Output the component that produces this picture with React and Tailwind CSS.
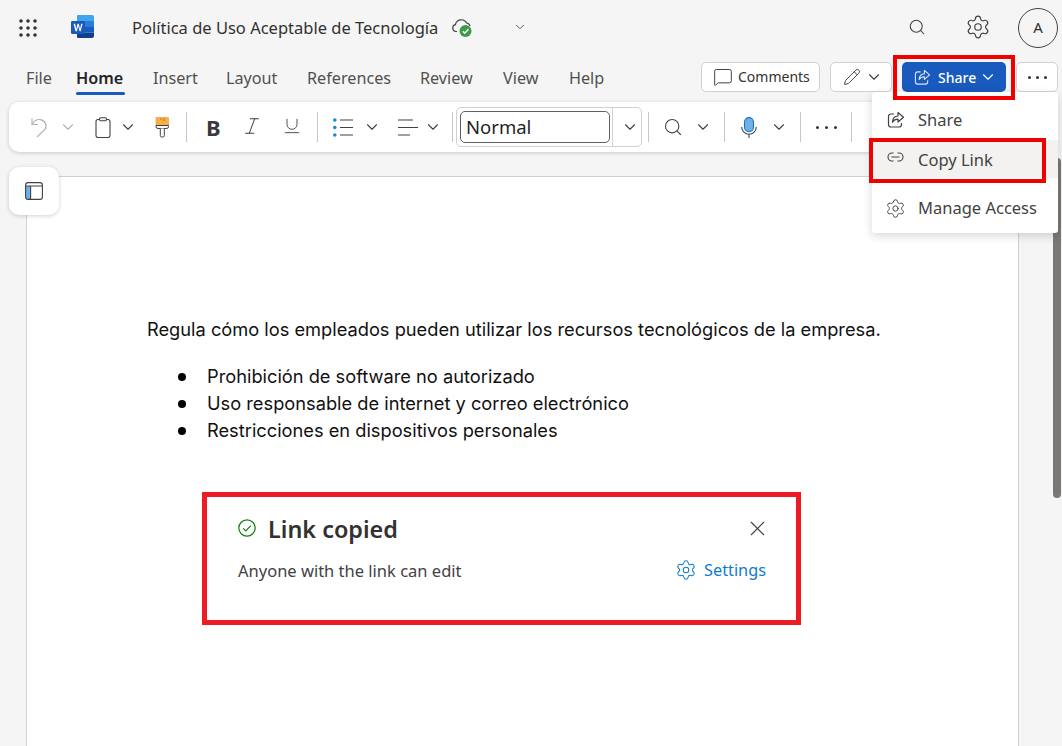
import React from "react";
import { ChevronDown, Italic, MessageSquare, Pencil, Search, Settings, Underline, X } from "lucide-react";

const UI_FONT = "font-['Noto_Sans','Open_Sans',sans-serif]";

function Waffle() {
  const dots = [];
  for (let r = 0; r < 3; r++) {
    for (let c = 0; c < 3; c++) {
      dots.push(<circle key={`${r}-${c}`} cx={2 + c * 7} cy={2 + r * 7} r="1.8" fill="#333" />);
    }
  }
  return (
    <svg width="18" height="18" viewBox="0 0 18 18">
      {dots}
    </svg>
  );
}

function WordLogo() {
  return (
    <svg width="23" height="23" viewBox="0 0 23 23">
      <path d="M7 0h14a2 2 0 0 1 2 2v4H6V1a1 1 0 0 1 1-1z" fill="#41a5ee" />
      <rect x="6" y="6" width="17" height="6" fill="#2b7cd3" />
      <rect x="6" y="12" width="17" height="5.5" fill="#185abd" />
      <path d="M6 17.5h17V21a2 2 0 0 1-2 2H7a1 1 0 0 1-1-1z" fill="#103f91" />
      <rect x="0" y="6" width="14" height="13" rx="1.2" fill="#185abd" />
      <path d="M2.6 8.8h1.5l1.2 5.2 1.2-5.2h1.3l1.2 5.2 1.2-5.2h1.4l-1.9 7.4H8.6L7.2 11l-1.3 5.2H4.5z" fill="#fff" />
    </svg>
  );
}

function CloudCheck() {
  return (
    <svg width="23" height="22" viewBox="0 0 23 22" fill="none">
      <path d="M6 14.5H5a3.5 3.5 0 0 1-.6-6.9A6 6 0 0 1 15.6 6a4 4 0 0 1 3.4 3" stroke="#424242" strokeWidth="1.2" />
      <circle cx="14.5" cy="14" r="6" fill="#3a9a45" />
      <path d="M11.8 14.2l2 2 3.6-3.9" stroke="#fff" strokeWidth="1.6" />
    </svg>
  );
}

function ShareIcon({ color = "#424242", size = 18 }) {
  return (
    <svg width={size} height={size} viewBox="0 0 18 18" fill="none" stroke={color} strokeWidth="1.2" strokeLinejoin="round">
      <path d="M7 3H4a2.5 2.5 0 0 0-2.5 2.5v8A2.5 2.5 0 0 0 4 16h8a2.5 2.5 0 0 0 2.5-2.5V12" />
      <path d="M11 1.5l5.5 4.7-5.5 4.8V8.2c-2.6 0-4.4 1-5.6 3 .2-3.7 2.2-6 5.6-6.2z" />
    </svg>
  );
}

function LinkIcon() {
  return (
    <svg width="17" height="10" viewBox="0 0 17 10" fill="none" stroke="#424242" strokeWidth="1.1" className="-mt-[5px]">
      <path d="M6.5 1H5a4 4 0 0 0 0 8h1.5M10.5 1H12a4 4 0 0 1 0 8h-1.5M4.5 5h8" />
    </svg>
  );
}

function UndoIcon() {
  return (
    <svg width="17" height="21" viewBox="0 0 17 21" fill="none" stroke="#b5b3b1" strokeWidth="1.2">
      <path d="M1 1.5v6h6" />
      <path d="M1 7.5C3 4 6 2 9.5 2.6c4.5.8 7 6 4.6 9.6L6 20" />
    </svg>
  );
}

function ClipboardIcon() {
  return (
    <svg width="16" height="21" viewBox="0 0 16 21" fill="none" stroke="#424242" strokeWidth="1.1">
      <rect x="1" y="2.5" width="14" height="18" rx="2" />
      <rect x="4.5" y="0.8" width="7" height="3" rx="1.2" fill="#f5f5f5" />
    </svg>
  );
}

function BrushIcon() {
  return (
    <svg width="14" height="21" viewBox="0 0 14 21" fill="none">
      <path d="M1 0.5h12.5v9a2 2 0 0 1-2 2H3a2 2 0 0 1-2-2z" fill="#f7b04a" stroke="#e59a2e" strokeWidth="0.6" />
      <path d="M1 8.5h12.5v1a2 2 0 0 1-2 2H3a2 2 0 0 1-2-2z" fill="#fff" stroke="#424242" strokeWidth="1" />
      <path d="M5.3 11.5v7a1.5 1.5 0 0 0 1.5 1.5h1a1.5 1.5 0 0 0 1.5-1.5v-7" stroke="#424242" strokeWidth="1" fill="#fff" />
      <path d="M9 1v3M6 1v2" stroke="#c9770f" strokeWidth="1" />
    </svg>
  );
}

function BulletsIcon() {
  return (
    <svg width="20" height="19" viewBox="0 0 20 19" fill="none">
      <circle cx="1.8" cy="2" r="1.8" fill="#1a86d9" />
      <circle cx="1.8" cy="9.5" r="1.8" fill="#1a86d9" />
      <circle cx="1.8" cy="17" r="1.8" fill="#1a86d9" />
      <path d="M7 2h13M7 9.5h13M7 17h13" stroke="#424242" strokeWidth="1.2" />
    </svg>
  );
}

function AlignIcon() {
  return (
    <svg width="20" height="17" viewBox="0 0 20 17" fill="none" stroke="#424242" strokeWidth="1.2">
      <path d="M0 1h15M0 8.5h20M0 16h12" />
    </svg>
  );
}

function MicIcon() {
  return (
    <svg width="16" height="21" viewBox="0 0 16 21" fill="none">
      <rect x="3.5" y="0.6" width="9" height="14" rx="4.5" fill="#6fb1e6" stroke="#1a78c2" strokeWidth="1.1" />
      <path d="M0.7 10a7.3 7.3 0 0 0 14.6 0M8 17.3V21" stroke="#424242" strokeWidth="1.1" />
    </svg>
  );
}

function PanelIcon() {
  return (
    <svg width="18" height="18" viewBox="0 0 18 18" fill="none">
      <rect x="1" y="4" width="4.6" height="13" fill="#6fb1e6" />
      <rect x="0.6" y="0.6" width="16.8" height="16.8" rx="2.5" stroke="#424242" strokeWidth="1.1" />
      <path d="M1 4h16M5.6 4v13.4" stroke="#424242" strokeWidth="1.1" />
    </svg>
  );
}

function CheckCircle() {
  return (
    <svg width="18" height="18" viewBox="0 0 18 18" fill="none" stroke="#107c10" strokeWidth="1.2" className="shrink-0 -mt-[3px]">
      <circle cx="9" cy="9" r="8.2" />
      <path d="M5.2 9.4l2.6 2.5 5-5.2" />
    </svg>
  );
}

function Dots({ gap = "gap-[5px]" }) {
  return (
    <div className={`flex ${gap}`}>
      <span className="w-[3px] h-[3px] rounded-full bg-[#333]" />
      <span className="w-[3px] h-[3px] rounded-full bg-[#333]" />
      <span className="w-[3px] h-[3px] rounded-full bg-[#333]" />
    </div>
  );
}

function Sep({ className }) {
  return <div className={`w-px h-[30px] shrink-0 bg-[#c8c6c4] ${className}`} />;
}

function Chev({ className = "", color = "#424242" }) {
  return <ChevronDown size={18} strokeWidth={1.5} color={color} className={`shrink-0 ${className}`} />;
}

const TABS = [
  { label: "File", w: "w-[50px]" },
  { label: "Home", w: "w-[77px]", active: true },
  { label: "Insert", w: "w-[73px]" },
  { label: "Layout", w: "w-[81px]" },
  { label: "References", w: "w-[113px]" },
  { label: "Review", w: "w-[83px]" },
  { label: "View", w: "w-[66px]" },
  { label: "Help", w: "w-[50px]" },
];

const BULLETS = [
  "Prohibición de software no autorizado",
  "Uso responsable de internet y correo electrónico",
  "Restricciones en dispositivos personales",
];

export default function App() {
  return (
    <div className={`relative w-[1062px] h-[746px] overflow-hidden bg-[#f5f5f5] ${UI_FONT}`}>
      {/* title bar */}
      <div className="h-[55px] flex items-center">
        <div className="ml-[19px] shrink-0"><Waffle /></div>
        <div className="ml-[34px] shrink-0 -mt-[2px]"><WordLogo /></div>
        <span className="ml-[38px] text-[16.5px] leading-none text-[#323130] mt-[2px] w-[319px] whitespace-nowrap">Política de Uso Aceptable de Tecnología</span>
        <CloudCheck />
        <ChevronDown size={14} strokeWidth={1.5} color="#424242" className="ml-[39px] -mt-[2px]" />
        <Search size={18} strokeWidth={1.4} color="#424242" className="ml-[381px] -mt-[1px]" />
        <Settings size={26} strokeWidth={1.1} color="#424242" className="ml-[39px] -mt-[1px]" />
        <div className="ml-[27px] w-[40px] h-[40px] rounded-full border border-[#424242] flex items-center justify-center text-[15px] text-[#323130]">A</div>
      </div>

      {/* tabs */}
      <div className="h-[47px] flex items-start pl-[26px]">
        {TABS.map((t) => (
          <div key={t.label} className={`${t.w} h-[40px] relative pt-[10px] text-[16.2px] leading-[26px] ${t.active ? "font-semibold text-[#242424]" : "text-[#505050]"}`}>
            {t.label}
            {t.active && <span className="absolute left-0 top-[37px] w-[49px] h-[3px] rounded-full bg-[#185abd]" />}
          </div>
        ))}
        <div className="ml-[82px] mt-[7px] w-[119px] h-[30px] bg-white border border-[#d1d1d1] rounded-[5px] flex items-center pl-[11px] gap-[5px] text-[14px] text-[#323130]">
          <MessageSquare size={20} strokeWidth={1.1} />
          <span className="-mt-[2px]">Comments</span>
        </div>
        <div className="ml-[10px] mt-[7px] w-[62px] h-[30px] bg-white border border-[#d1d1d1] rounded-[5px] flex items-center pl-[12px] gap-[4px]">
          <Pencil size={18} strokeWidth={1.3} color="#424242" />
          <Chev />
        </div>
        <div className="ml-[10px] mt-[7px] w-[104px] h-[30px] bg-[#185abd] rounded-[5px] flex items-center pl-[12px] text-[14px] text-white font-medium">
          <ShareIcon color="#dbe7f8" size={17} />
          <span className="ml-[7px]">Share</span>
          <Chev color="#fff" className="ml-[3px]" />
        </div>
        <div className="ml-[10px] mt-[7px] w-[42px] h-[30px] bg-white border border-[#d1d1d1] rounded-[5px] flex items-center justify-center">
          <Dots />
        </div>
      </div>

      {/* ribbon */}
      <div className="ml-[9px] mr-[12px] h-[50px] bg-white rounded-[10px] shadow-[0_1px_4px_rgba(0,0,0,0.18)] flex items-center">
        <div className="ml-[22px]"><UndoIcon /></div>
        <Chev className="ml-[11px]" color="#b5b3b1" />
        <div className="ml-[18px]"><ClipboardIcon /></div>
        <Chev className="ml-[8px]" />
        <div className="ml-[18px]"><BrushIcon /></div>
        <Sep className="ml-[17px]" />
        <span className="ml-[19px] w-[20px] text-[22px] leading-none font-bold text-[#3a3a3a]">B</span>
        <Italic size={22} strokeWidth={1.1} color="#424242" className="ml-[15px] shrink-0 -mt-[2px]" />
        <Underline size={20} strokeWidth={1.1} color="#424242" className="ml-[19px] shrink-0 -mt-[2px]" />
        <Sep className="ml-[15px]" />
        <div className="ml-[15px]"><BulletsIcon /></div>
        <Chev className="ml-[10px]" />
        <div className="ml-[17px]"><AlignIcon /></div>
        <Chev className="ml-[6px]" />
        <Sep className="ml-[10px]" />
        <div className="ml-[3px] w-[186px] h-[40px] shrink-0 border border-[#d1d1d1] rounded-[5px] flex items-center">
          <div className="ml-[3px] w-[150px] h-[32px] border border-[#616161] rounded-[5px] flex items-center pl-[5px] text-[18.5px] text-[#1f1f1f]">Normal</div>
          <div className="ml-[2px] w-px h-[38px] bg-[#d1d1d1]" />
          <Chev className="ml-[8px]" />
        </div>
        <Sep className="ml-[6px]" />
        <Search size={20} strokeWidth={1.3} color="#424242" className="ml-[14px] shrink-0" />
        <Chev className="ml-[11px]" />
        <Sep className="ml-[12px]" />
        <div className="ml-[16px]"><MicIcon /></div>
        <Chev className="ml-[13px]" />
        <Sep className="ml-[12px]" />
        <div className="ml-[15px]"><Dots gap="gap-[6px]" /></div>
        <Sep className="ml-[14px]" />
      </div>

      {/* document page */}
      <div className="ml-[26px] mr-[43px] mt-[24px] h-[600px] bg-white border border-[#d1d1d1] pt-[139px] pl-[120px] font-['Inter',sans-serif] text-[18.25px] leading-[27px] text-[#111]">
        <p className="whitespace-nowrap">Regula cómo los empleados pueden utilizar los recursos tecnológicos de la empresa.</p>
        <ul className="mt-[20px] pl-[31px]">
          {BULLETS.map((b) => (
            <li key={b} className="flex items-center whitespace-nowrap">
              <span className="w-[8px] h-[8px] rounded-full bg-black shrink-0" />
              <span className="ml-[21px]">{b}</span>
            </li>
          ))}
        </ul>

        {/* pasted notification */}
        <div className={`mt-[48px] ml-[55px] w-[599px] h-[133px] border-[5px] border-[#ed1c24] pt-[16px] pl-[31px] pr-[30px] ${UI_FONT}`}>
          <div className="flex items-center h-[32px]">
            <CheckCircle />
            <span className="ml-[12px] text-[23.4px] leading-[32px] font-semibold text-[#323130]">Link copied</span>
            <X size={25} strokeWidth={1.1} color="#424242" className="ml-auto -mr-[4px] -mt-[2px]" />
          </div>
          <div className="mt-[14px] flex items-center">
            <span className="text-[16.5px] leading-[24px] text-[#424242]">Anyone with the link can edit</span>
            <Settings size={22} strokeWidth={1.1} color="#0f7bd0" className="ml-auto -mt-[2px]" />
            <span className="ml-[7px] text-[16.3px] leading-[24px] text-[#0f7bd0] -mt-[2px]">Settings</span>
          </div>
        </div>
      </div>

      {/* floating bits */}
      <div className="absolute left-[9px] top-[167px] w-[50px] h-[48px] bg-white rounded-[10px] shadow-[0_1px_4px_rgba(0,0,0,0.18)] flex items-center justify-center">
        <PanelIcon />
      </div>
      <div className="absolute left-[1053px] top-[158px] w-[8px] h-[340px] rounded-full bg-[#7a7775]" />

      {/* share menu */}
      <div className="absolute left-[872px] top-[92px] w-[186px] h-[141px] bg-white rounded-[3px] shadow-[0_3px_10px_rgba(0,0,0,0.16)] pt-[9px] text-[16.5px] text-[#424242]">
        <div className="h-[38px] flex items-center pl-[15px]">
          <ShareIcon size={18} />
          <span className="ml-[13px]">Share</span>
        </div>
        <div className="mt-[1px] h-[38px] bg-[#f3f2f1] flex items-center pl-[15px]">
          <LinkIcon />
          <span className="ml-[14px] mt-[2px]">Copy Link</span>
        </div>
        <div className="mt-[11px] h-[38px] flex items-center pl-[13px]">
          <Settings size={21} strokeWidth={1.1} />
          <span className="ml-[12px]">Manage Access</span>
        </div>
      </div>

      {/* annotation boxes */}
      <div className="absolute left-[893px] top-[55px] w-[122px] h-[45px] border-4 border-[#f00000]" />
      <div className="absolute left-[869px] top-[138px] w-[177px] h-[45px] border-4 border-[#f00000]" />
    </div>
  );
}
